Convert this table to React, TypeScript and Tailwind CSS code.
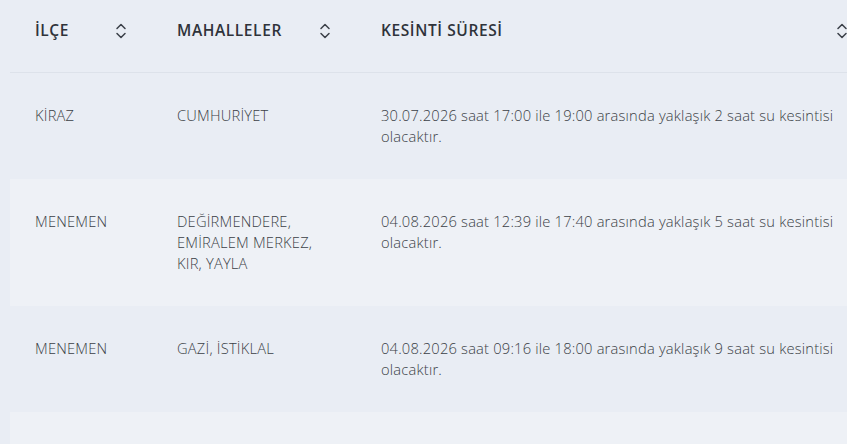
import { useState } from 'react';

type Row = {
  ilce: string;
  mahalleler: string[];
  sure: string;
};

const rows: Row[] = [
  {
    ilce: 'KİRAZ',
    mahalleler: ['CUMHURİYET'],
    sure: '30.07.2026 saat 17:00 ile 19:00 arasında yaklaşık 2 saat su kesintisi olacaktır.',
  },
  {
    ilce: 'MENEMEN',
    mahalleler: ['DEĞİRMENDERE,', 'EMİRALEM MERKEZ,', 'KIR, YAYLA'],
    sure: '04.08.2026 saat 12:39 ile 17:40 arasında yaklaşık 5 saat su kesintisi olacaktır.',
  },
  {
    ilce: 'MENEMEN',
    mahalleler: ['GAZİ, İSTİKLAL'],
    sure: '04.08.2026 saat 09:16 ile 18:00 arasında yaklaşık 9 saat su kesintisi olacaktır.',
  },
];

function SortIcon() {
  return (
    <svg width="12" height="18" viewBox="0 0 12 18" fill="none" stroke="#3a3f47" strokeWidth="1.5" strokeLinecap="round" strokeLinejoin="round">
      <path d="M2 6.5 6 2.5l4 4" />
      <path d="M2 11.5l4 4 4-4" />
    </svg>
  );
}

export default function App() {
  const [sortKey, setSortKey] = useState<string | null>(null);

  const headers = [
    { key: 'ilce', label: 'İLÇE', width: 'w-[142px]' },
    { key: 'mahalleler', label: 'MAHALLELER', width: 'w-[204px]' },
    { key: 'sure', label: 'KESİNTİ SÜRESİ', width: 'w-[517px]' },
  ];

  return (
    <div
      className="min-h-screen w-full overflow-hidden bg-[#e9edf4] pl-[10px] text-[#3b3f46]"
      style={{ fontFamily: '"Open Sans", "Noto Sans", sans-serif' }}
    >
      <table className="w-[863px] table-fixed border-collapse">
        <thead>
          <tr className="border-b border-[#dde2ea]">
            {headers.map((h) => (
              <th
                key={h.key}
                onClick={() => setSortKey(h.key)}
                className={`${h.width} cursor-pointer pl-[25px] pr-[25px] pt-5 pb-[31px] text-left align-top`}
              >
                <div className="flex items-center justify-between text-[15.5px] font-semibold leading-[21px] tracking-[0.6px] text-[#2f333a]">
                  <span className={sortKey === h.key ? 'text-black' : ''}>{h.label}</span>
                  <SortIcon />
                </div>
              </th>
            ))}
          </tr>
        </thead>
        <tbody>
          {rows.map((row, i) => (
            <tr key={i} className={i % 2 === 1 ? 'bg-[#eef1f6]' : 'bg-[#e9edf4]'}>
              <td className="py-8 pl-[25px] pr-[25px] align-top text-[14.7px] font-light leading-[21px] tracking-[0.2px]">{row.ilce}</td>
              <td className="py-8 pl-[25px] pr-[25px] align-top text-[14.7px] font-light leading-[21px] tracking-[0.2px]">
                {row.mahalleler.map((m) => (
                  <div key={m}>{m}</div>
                ))}
              </td>
              <td className="py-8 pl-[25px] pr-[25px] align-top text-[14.7px] font-light leading-[21px] tracking-[0.2px]">{row.sure}</td>
            </tr>
          ))}
          <tr className="bg-[#eef1f6]">
            <td colSpan={3} className="h-[40px]" />
          </tr>
        </tbody>
      </table>
    </div>
  );
}
